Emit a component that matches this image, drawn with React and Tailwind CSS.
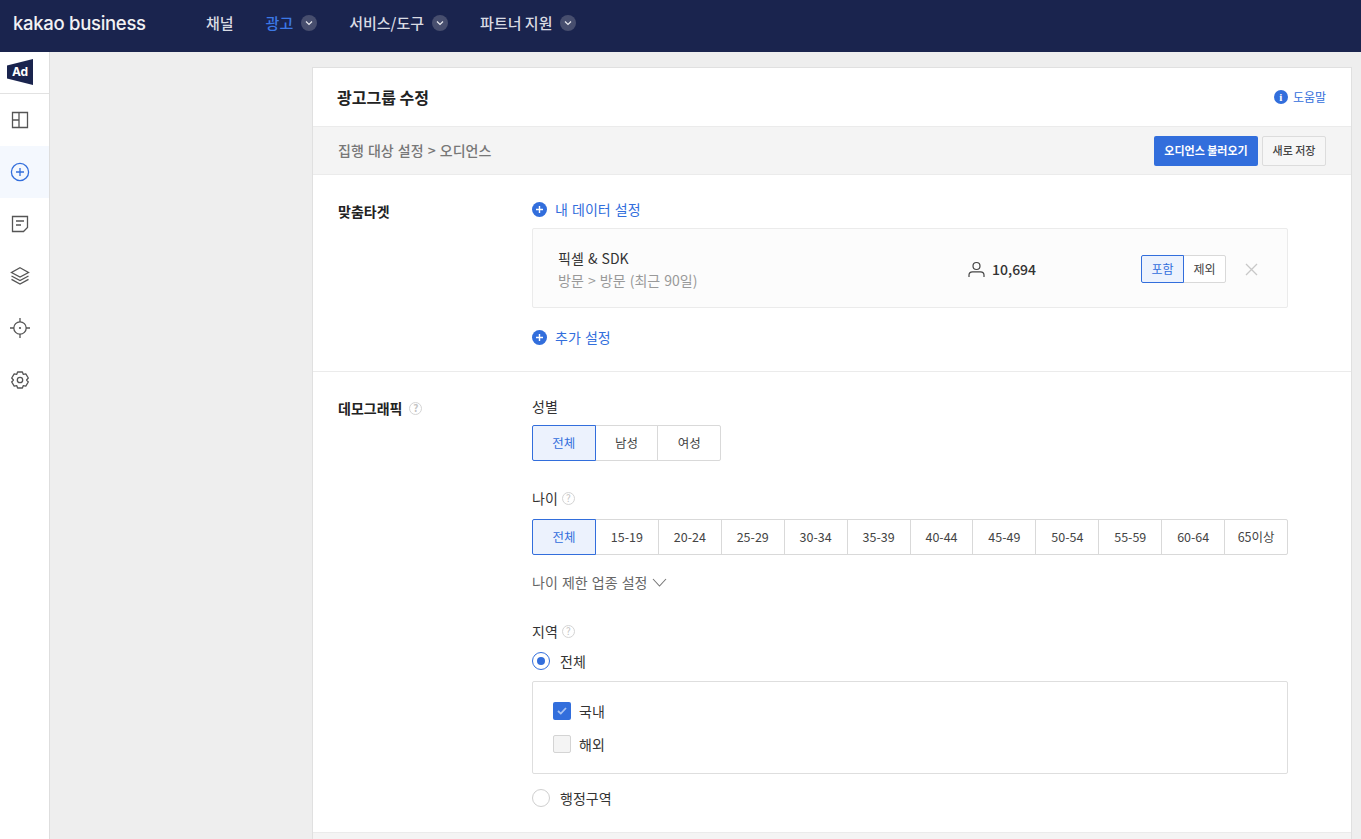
import React from "react";

const FONT = "font-['Noto_Sans_CJK_KR','Noto_Sans',sans-serif]";

function Chevron() {
  return (
    <span className="flex h-4 w-4 items-center justify-center rounded-full bg-[#474e6e]">
      <svg width="8" height="6" viewBox="0 0 8 6" fill="none" stroke="#e8e9ee" strokeWidth="1.2">
        <path d="M1 1.5 L4 4.5 L7 1.5" />
      </svg>
    </span>
  );
}

function Help() {
  return (
    <span className="flex h-[13px] w-[13px] items-center justify-center rounded-full border border-[#d4d4d4] text-[10px] leading-none text-[#c4c4c4]">?</span>
  );
}

function PlusCircle() {
  return (
    <svg width="15" height="15" viewBox="0 0 15 15">
      <circle cx="7.5" cy="7.5" r="7.5" fill="#326edc" />
      <path d="M7.5 4 V11 M4 7.5 H11" stroke="#fff" strokeWidth="1.4" />
    </svg>
  );
}

function NavIcon({ children, active }) {
  return (
    <div className={`flex h-[52px] items-center pl-[10px] ${active ? "bg-[#f4f8fe]" : ""}`}>
      <svg width="20" height="20" viewBox="0 0 20 20" fill="none" stroke={active ? "#326edc" : "#555"} strokeWidth="1.3">
        {children}
      </svg>
    </div>
  );
}

function Seg({ children, active }) {
  return (
    <div className={`-ml-px flex flex-1 items-center justify-center border first:ml-0 ${active ? "z-10 border-[#326edc] bg-[#ecf2fd] text-[#326edc] first:rounded-l-[2px]" : "border-[#d9d9d9] bg-white text-[#444]"} last:rounded-r-[2px]`}>
      {children}
    </div>
  );
}

export default function App() {
  const ages = ["15-19", "20-24", "25-29", "30-34", "35-39", "40-44", "45-49", "50-54", "55-59", "60-64", "65이상"];
  return (
    <div className={`flex h-[839px] flex-col overflow-hidden bg-[#eeeeee] text-[14px] text-[#333] [word-spacing:1px] ${FONT}`}>
      <header className="flex h-[52px] shrink-0 items-center bg-[#1a244e] pb-[6px] pl-[13px]">
        <span className="w-[193px] font-['Inter',sans-serif] text-[18.5px] font-medium leading-none tracking-[-0.3px] text-[#f2f2f4] [word-spacing:0]">kakao business</span>
        <nav className="flex items-center text-[15px] font-medium text-[#d9dbe3] [word-spacing:0]">
          <span className="mr-8">채널</span>
          <span className="text-[#3c78e6]">광고</span>
          <span className="ml-2 mr-8"><Chevron /></span>
          <span>서비스/도구</span>
          <span className="ml-2 mr-8"><Chevron /></span>
          <span>파트너 지원</span>
          <span className="ml-2"><Chevron /></span>
        </nav>
      </header>

      <div className="flex min-h-0 flex-1">
        <aside className="w-[50px] shrink-0 border-r border-[#dedede] bg-white">
          <div className="flex h-[42px] items-center border-b border-[#e2e2e2] pb-[2px] pl-[7px]">
            <div className="relative h-[26px] w-[26px]">
              <svg width="26" height="26" viewBox="0 0 26 26" className="absolute inset-0">
                <path d="M0 6.5 L26 0 V26 L0 19.5 Z" fill="#1a244e" />
              </svg>
              <span className="absolute inset-0 flex items-center justify-center font-['Inter',sans-serif] text-[12px] font-bold leading-none text-white">Ad</span>
            </div>
          </div>
          <NavIcon>
            <path d="M2.5 2.5 H17.5 V17.5 H2.5 Z M9 2.5 V17.5 M2.5 10 H9" />
          </NavIcon>
          <NavIcon active>
            <circle cx="10" cy="10" r="8.6" />
            <path d="M10 6 V14 M6 10 H14" />
          </NavIcon>
          <NavIcon>
            <path d="M2.5 2.5 H17.5 V13.5 L13.5 17.5 H2.5 Z M6 7 H14 M6 11 H11" />
          </NavIcon>
          <NavIcon>
            <path d="M10 1.8 L18.5 6.5 L10 11 L1.5 6.5 Z M1.5 10 L10 14.6 L18.5 10 M1.5 13.4 L10 18 L18.5 13.4" />
          </NavIcon>
          <NavIcon>
            <circle cx="10" cy="10" r="6.2" />
            <circle cx="10" cy="10" r="1.1" fill="#555" stroke="none" />
            <path d="M10 0 V4 M10 16 V20 M0 10 H4 M16 10 H20" />
          </NavIcon>
          <NavIcon>
            <path d="M7.6 2 H12.4 L13.2 4.3 L15.8 3.8 L18.3 8 L16.6 10 L18.3 12 L15.8 16.2 L13.2 15.7 L12.4 18 H7.6 L6.8 15.7 L4.2 16.2 L1.7 12 L3.4 10 L1.7 8 L4.2 3.8 L6.8 4.3 Z" strokeLinejoin="round" />
            <circle cx="10" cy="10" r="2.7" />
          </NavIcon>
        </aside>

        <main className="min-w-0 flex-1 pl-[262px] pr-[9px] pt-[15px]">
          <div className="border border-[#e0e0e0] bg-white">
            <div className="flex h-[58px] items-center justify-between pl-6 pr-[25px]">
              <h1 className="text-[16px] font-bold leading-none text-[#222] [word-spacing:0]">광고그룹 수정</h1>
              <div className="flex items-center gap-[5px] text-[12px] text-[#326edc]">
                <span className="flex h-[14px] w-[14px] items-center justify-center rounded-full bg-[#326edc] font-['Liberation_Serif',serif] text-[11px] font-bold leading-none text-white">i</span>
                도움말
              </div>
            </div>

            <div className="flex h-[49px] items-center justify-between border-y border-[#ebebeb] bg-[#f4f4f4] pl-[25px] pr-[25px]">
              <span className="font-medium text-[#777]">집행 대상 설정 &gt; 오디언스</span>
              <div className="flex gap-1">
                <button className="flex h-[30px] w-[104px] items-center justify-center rounded-[2px] bg-[#326edc] text-[11px] font-bold text-white">오디언스 불러오기</button>
                <button className="flex h-[30px] w-[64px] items-center justify-center rounded-[2px] border border-[#dcdcdc] bg-[#f6f6f6] text-[11px] font-medium text-[#444]">새로 저장</button>
              </div>
            </div>

            <section className="flex h-[197px] border-b border-[#ebebeb] pl-[25px] pr-[63px]">
              <div className="w-[194px] shrink-0 pt-[26px] font-bold leading-[20px] text-[#222]">맞춤타겟</div>
              <div className="min-w-0 flex-1 pt-[24px]">
                <div className="flex h-[20px] items-center gap-2 text-[#326edc]">
                  <PlusCircle />
                  내 데이터 설정
                </div>
                <div className="mt-[9px] flex h-[80px] items-center rounded-[2px] border border-[#ebebeb] bg-[#fcfcfc] pl-[25px] pr-[29px] pt-[2px]">
                  <div className="w-[410px] shrink-0">
                    <div className="leading-[20px] text-[#333]">픽셀 &amp; SDK</div>
                    <div className="mt-[2px] leading-[20px] text-[#999]">방문 &gt; 방문 (최근 90일)</div>
                  </div>
                  <div className="flex items-center gap-[7px]">
                    <svg width="17" height="17" viewBox="0 0 17 17" fill="none" stroke="#444" strokeWidth="1.2">
                      <circle cx="8.5" cy="5" r="3.5" />
                      <path d="M1 16 V14 Q1 10.8 4.5 10.8 H12.5 Q16 10.8 16 14 V16" />
                    </svg>
                    <span className="font-medium text-[#333]">10,694</span>
                  </div>
                  <div className="ml-auto flex h-[28px] w-[85px] text-[12px]">
                    <Seg active>포함</Seg>
                    <Seg>제외</Seg>
                  </div>
                  <svg width="13" height="13" viewBox="0 0 13 13" fill="none" stroke="#c8c8c8" strokeWidth="1.3" className="ml-[19px]">
                    <path d="M1 1 L12 12 M12 1 L1 12" />
                  </svg>
                </div>
                <div className="mt-[19px] flex h-[20px] items-center gap-2 text-[#326edc]">
                  <PlusCircle />
                  추가 설정
                </div>
              </div>
            </section>

            <section className="flex h-[461px] border-b border-[#ebebeb] pl-[25px] pr-[63px]">
              <div className="mt-[26px] flex h-[20px] w-[194px] shrink-0 items-center gap-[7px] font-bold text-[#222]">
                데모그래픽 <Help />
              </div>
              <div className="min-w-0 flex-1 pt-[24px]">
                <div className="leading-[20px] text-[#333]">성별</div>
                <div className="mt-[9px] flex h-[36px] w-[189px] text-[12.5px]">
                  <Seg active>전체</Seg>
                  <Seg>남성</Seg>
                  <Seg>여성</Seg>
                </div>

                <div className="mt-[27px] flex h-[20px] items-center gap-1 text-[#333]">나이 <Help /></div>
                <div className="mt-[11px] flex h-[36px] text-[12.5px]">
                  <Seg active>전체</Seg>
                  {ages.map((a) => <Seg key={a}>{a}</Seg>)}
                </div>
                <div className="mt-[17px] flex h-[20px] items-center gap-[5px] text-[#666]">
                  나이 제한 업종 설정
                  <svg width="15" height="9" viewBox="0 0 15 9" fill="none" stroke="#777" strokeWidth="1.1">
                    <path d="M1 1 L7.5 8 L14 1" />
                  </svg>
                </div>

                <div className="mt-[29px] flex h-[20px] items-center gap-1 text-[#333]">지역 <Help /></div>
                <div className="mt-[10px] flex h-[20px] items-center gap-[10px] text-[#333]">
                  <span className="flex h-[18px] w-[18px] items-center justify-center rounded-full border border-[#326edc] bg-white">
                    <span className="h-[8px] w-[8px] rounded-full bg-[#326edc]" />
                  </span>
                  전체
                </div>
                <div className="mt-[10px] h-[93px] rounded-[2px] border border-[#dedede] px-5 pt-[19px] text-[#333]">
                  <div className="flex h-[20px] items-center gap-2">
                    <span className="flex h-[18px] w-[18px] items-center justify-center rounded-[2px] bg-[#326edc]">
                      <svg width="10" height="8" viewBox="0 0 10 8" fill="none" stroke="#a9c3f2" strokeWidth="1.8">
                        <path d="M1 4 L3.8 6.6 L9 1" />
                      </svg>
                    </span>
                    국내
                  </div>
                  <div className="mt-[13px] flex h-[20px] items-center gap-2">
                    <span className="h-[18px] w-[18px] rounded-[2px] border border-[#d4d4d4] bg-[#f4f4f4]" />
                    해외
                  </div>
                </div>
                <div className="mt-[14px] flex h-[20px] items-center gap-[10px] text-[#333]">
                  <span className="h-[18px] w-[18px] rounded-full border border-[#cfcfcf] bg-white" />
                  행정구역
                </div>
              </div>
            </section>
            <div className="h-8 bg-[#f4f4f4]" />
          </div>
        </main>
      </div>
    </div>
  );
}
